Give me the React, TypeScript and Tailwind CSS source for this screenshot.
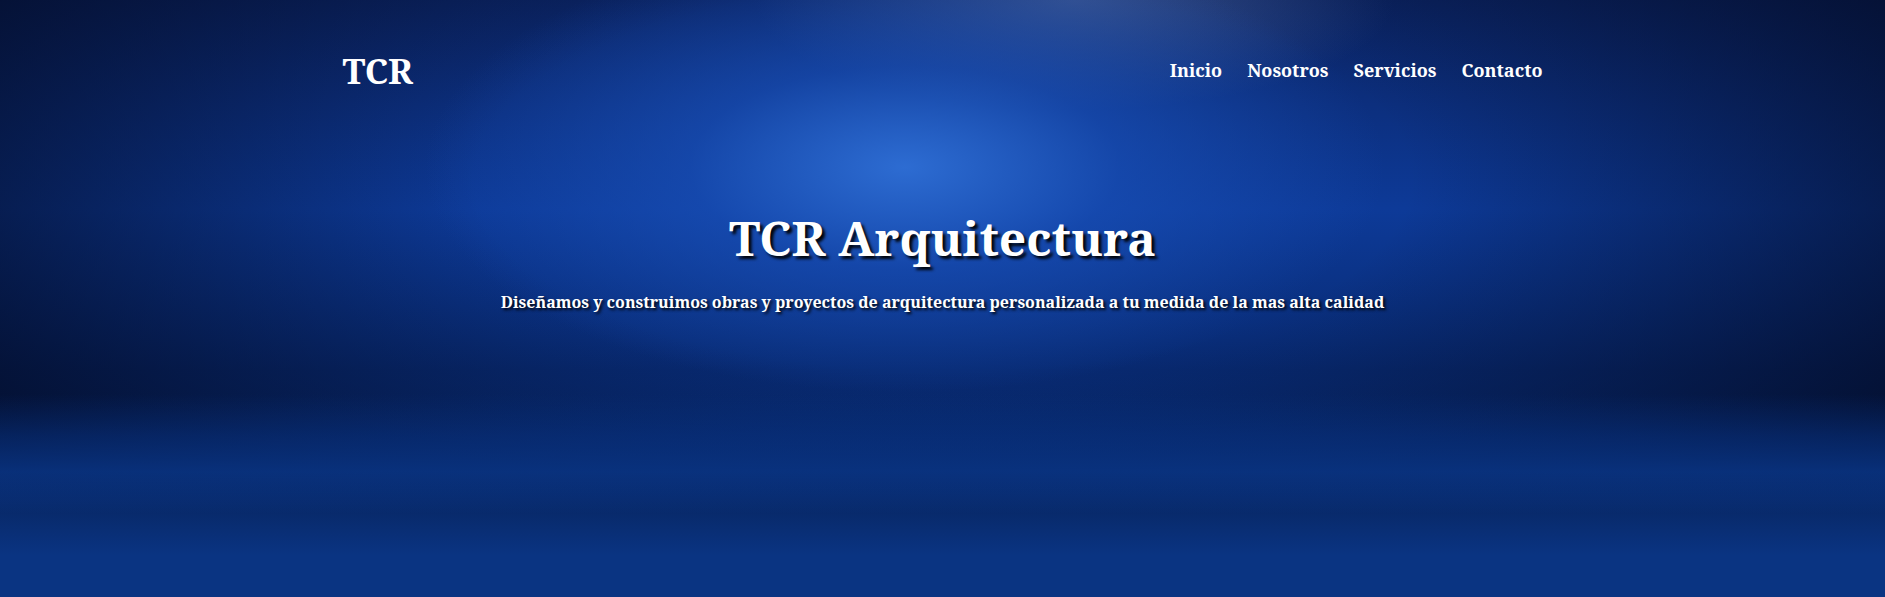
import React from "react";

export default function App() {
  return (
    <div className="relative h-screen w-full overflow-hidden font-['Noto_Serif','DejaVu_Serif',serif] text-white bg-[linear-gradient(to_bottom,rgba(3,14,45,0)_79%,rgba(3,14,45,0.26)_86%,rgba(3,14,45,0)_93%),radial-gradient(ellipse_480px_225px_at_48%_28%,rgba(45,108,210,1)_0%,rgba(25,80,185,0.65)_45%,rgba(15,60,160,0)_100%),radial-gradient(ellipse_320px_110px_at_57%_0%,rgba(70,95,150,0.75)_0%,rgba(70,95,150,0)_100%),linear-gradient(to_bottom,rgba(8,50,130,0)_66%,rgba(8,50,130,0.55)_73%,rgba(9,51,129,0.9)_79%,#0a3482_86%,#0a3482_100%),radial-gradient(ellipse_62%_80%_at_50%_30%,rgba(3,12,40,0)_40%,rgba(3,12,40,0.92)_100%),linear-gradient(to_bottom,#0b2464_0%,#0d3a98_35%,#082a72_62%,#0a3482_100%)]">
      <header className="mx-auto flex h-[140px] max-w-[1200px] items-center justify-between">
        <a className="text-[35px] font-bold leading-none">TCR</a>
        <nav className="flex items-center gap-[25px] text-[18px] font-bold">
          <a>Inicio</a>
          <a>Nosotros</a>
          <a>Servicios</a>
          <a>Contacto</a>
        </nav>
      </header>
      <section className="flex flex-col items-center pt-[74px] text-center">
        <h1 className="text-[48px] font-bold leading-none [text-shadow:3px_3px_3px_rgba(0,0,0,0.95)]">
          TCR Arquitectura
        </h1>
        <p className="mt-[28px] text-[16px] font-bold [text-shadow:2px_2px_3px_rgba(0,0,0,0.95)]">
          Diseñamos y construimos obras y proyectos de arquitectura personalizada a tu medida de la mas alta calidad
        </p>
      </section>
    </div>
  );
}
